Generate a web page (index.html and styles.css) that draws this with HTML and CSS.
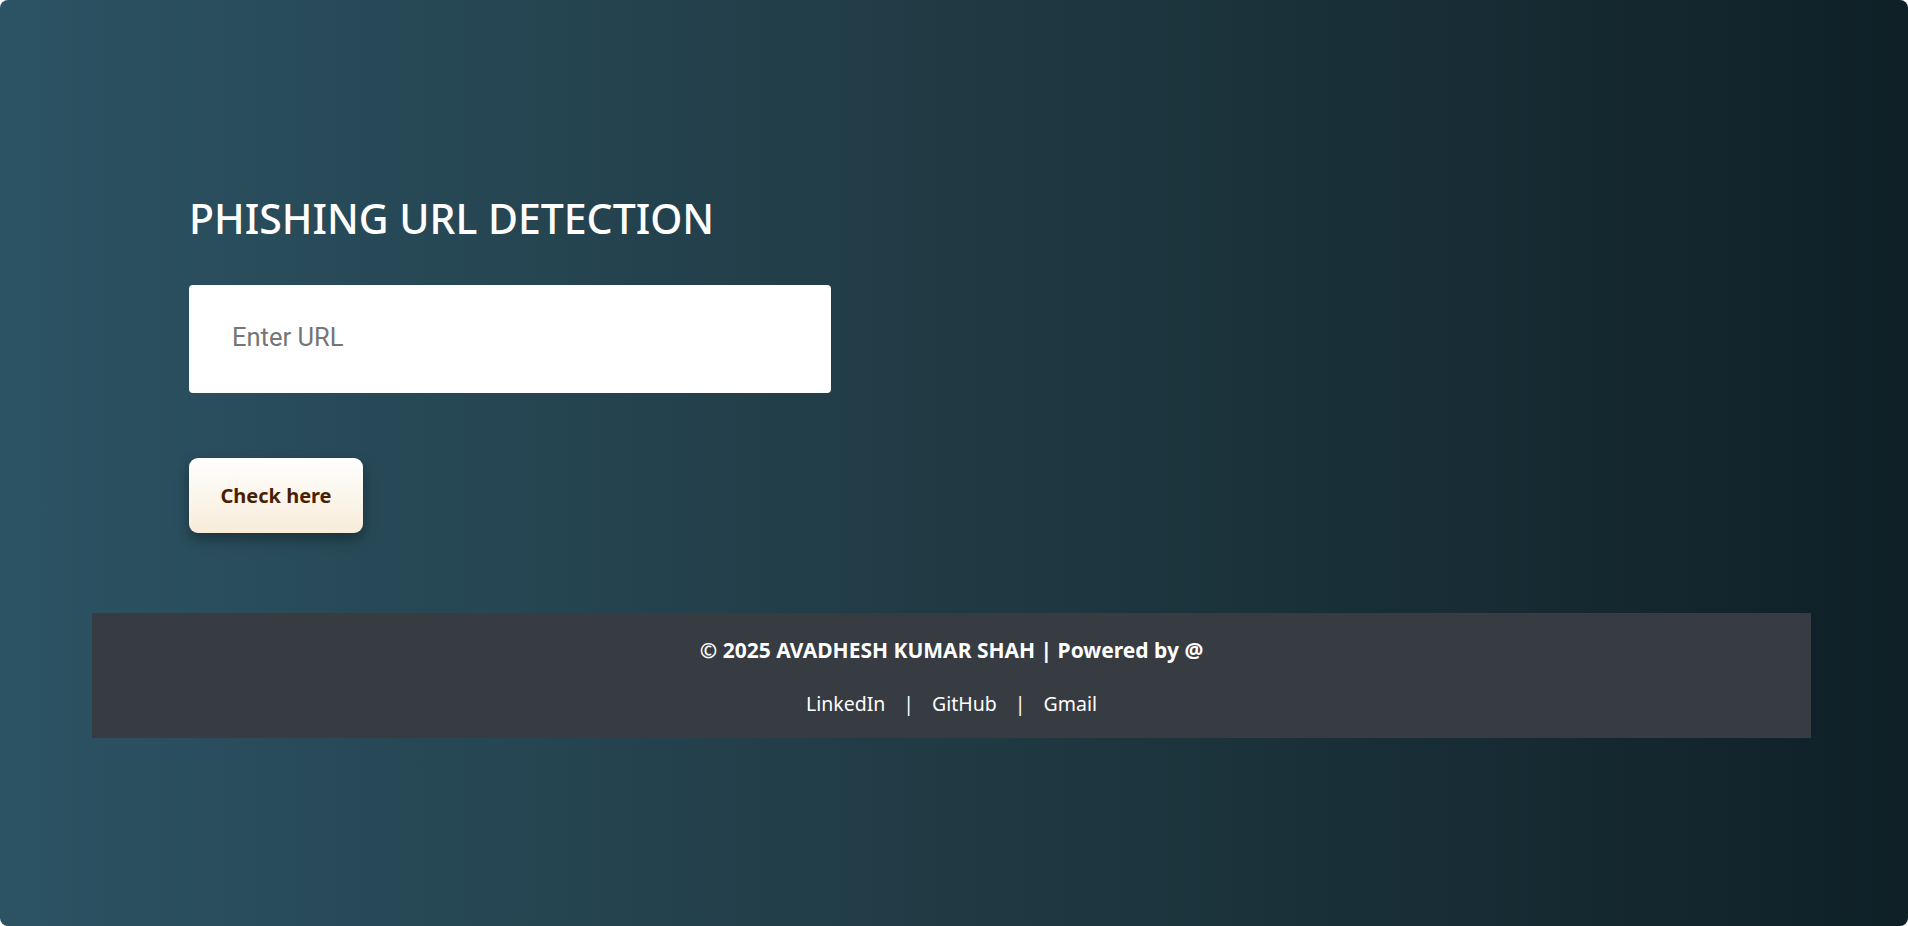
FILE: index.html
```html
<!DOCTYPE html>
<html lang="en">
<head>
<meta charset="utf-8">
<title>Phishing URL Detection</title>
<link rel="stylesheet" href="styles.css">
</head>
<body>
<div class="page">
  <main class="main">
    <h1 class="title">PHISHING URL DETECTION</h1>
    <form class="form" onsubmit="return false">
      <input class="url-input" type="text" placeholder="Enter URL">
      <button class="check-btn" type="submit">Check here</button>
    </form>
  </main>
  <footer class="footer">
    <p class="copy">© 2025 AVADHESH KUMAR SHAH | Powered by @</p>
    <p class="links"><a href="#">LinkedIn</a><span class="sep">|</span><a href="#">GitHub</a><span class="sep">|</span><a href="#">Gmail</a></p>
  </footer>
</div>
</body>
</html>
```

FILE: styles.css
```css
html, body {
  margin: 0;
  padding: 0;
  background: #ffffff;
}

.page {
  min-height: 926px;
  box-sizing: border-box;
  border-radius: 8px;
  background: linear-gradient(to right, #2c5364 0%, #203a43 50%, #0f2027 100%);
  font-family: "Noto Sans", "Open Sans", sans-serif;
  color: #ffffff;
  padding-top: 190px;
  display: flex;
  flex-direction: column;
}

.main {
  padding-left: 189px;
}

.title {
  margin: 0;
  font-size: 41px;
  font-weight: 500;
  line-height: 56px;
  letter-spacing: 0;
}

.form {
  display: flex;
  flex-direction: column;
  align-items: flex-start;
  margin-top: 39px;
}

.url-input {
  box-sizing: border-box;
  width: 642px;
  height: 108px;
  border: none;
  border-radius: 4px;
  background: #ffffff;
  padding: 0 0 5px 43px;
  font-family: Roboto, sans-serif;
  font-size: 25.5px;
  color: #333;
  outline: none;
}

.url-input::placeholder {
  color: #757575;
}

.check-btn {
  margin-top: 65px;
  width: 174px;
  height: 75px;
  border: none;
  border-radius: 9px;
  background: linear-gradient(to bottom, #ffffff 0%, #f8ecd9 100%);
  box-shadow: 0 6px 14px rgba(0, 0, 0, 0.35);
  font-family: "Noto Sans", "Open Sans", sans-serif;
  font-size: 20px;
  font-weight: 700;
  color: #4a1f00;
  cursor: pointer;
}

.footer {
  margin: 80px 97px 0 92px;
  background: #373b42;
  height: 125px;
  box-sizing: border-box;
  padding-top: 21px;
  text-align: center;
}

.copy {
  margin: 0;
  font-size: 21px;
  font-weight: 700;
  line-height: 32px;
}

.links {
  margin: 22px 0 0;
  font-size: 19.5px;
  line-height: 32px;
}

.links a {
  color: #ffffff;
  text-decoration: none;
}

.sep {
  margin: 0 18px;
}
```
